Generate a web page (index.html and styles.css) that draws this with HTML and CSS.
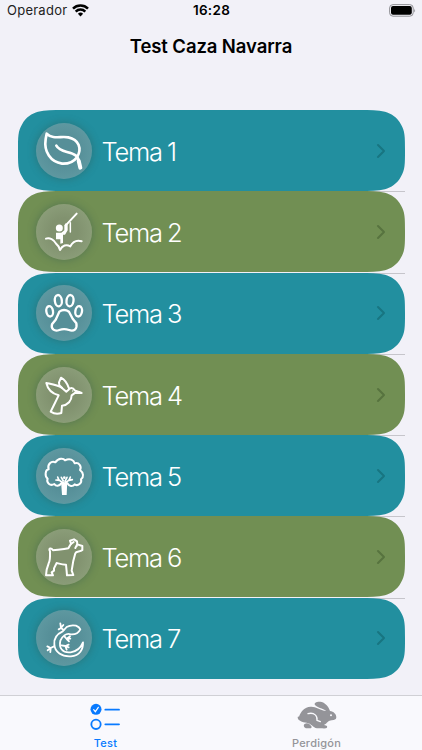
FILE: index.html
```html
<!DOCTYPE html>
<html lang="es">
<head>
<meta charset="utf-8">
<title>Test Caza Navarra</title>
<link rel="stylesheet" href="styles.css">
</head>
<body>
<svg class="defs" width="0" height="0" aria-hidden="true">
  <symbol id="card" viewBox="0 0 387 81" preserveAspectRatio="none"><path d="M0 40.5C0 27 0 21 4 14.5C8 7 14 3.5 20 1.8C27 0 35 0 45 0H342C352 0 360 0 367 1.8C373 3.5 379 7 383 14.5C387 21 387 27 387 40.5C387 54 387 60 383 66.5C379 74 373 77.5 367 79.2C360 81 352 81 342 81H45C35 81 27 81 20 79.2C14 77.5 8 74 4 66.5C0 60 0 54 0 40.5Z"/></symbol>
  <symbol id="chevron" viewBox="0 0 10 16"><path d="M2 2l6 6-6 6" fill="none" stroke="currentColor" stroke-width="2" stroke-linecap="round" stroke-linejoin="round"/></symbol>
</svg>
<div class="screen">
  <header>
    <div class="status">
      <div class="carrier"><span>Operador</span>
        <svg width="17" height="13" viewBox="0 0 17 13"><g fill="none" stroke="#000" stroke-width="2.5"><path d="M1 4.7a10.6 10.6 0 0 1 15 0"/><path d="M3.7 7.6a6.8 6.8 0 0 1 9.6 0"/></g><path d="M8.5 12.5L5.9 9.8a3.7 3.7 0 0 1 5.2 0z"/></svg>
      </div>
      <time>16:28</time>
      <div class="battery"><svg width="27" height="13" viewBox="0 0 27 13"><rect x=".6" y=".6" width="23.6" height="11.6" rx="3.4" fill="none" stroke="#919196"/><rect x="2" y="2" width="20.8" height="8.8" rx="2"/><path d="M25.2 4.4q1.6 2 0 4z" fill="#919196"/></svg></div>
    </div>
    <h1>Test Caza Navarra</h1>
  </header>
  <main>
    <a class="row teal"><svg class="shape"><use href="#card"/></svg>
      <svg class="icon" viewBox="77 68 168 168"><g class="line" stroke-width="8"><path d="M109 100C128 118 151 107 174 111C205 117 216 145 200 171C190 184 175 191 155 190C121 185 100 155 106 116Z"/><path d="M138 136C150 158 177 151 197 166Q206 174 206 187"/><path d="M205 181l5 21" stroke-width="12"/></g></svg>
      <span>Tema 1</span><svg class="chev"><use href="#chevron"/></svg></a>
    <a class="row green"><svg class="shape"><use href="#card"/></svg>
      <svg class="icon" viewBox="16 18 168 168"><circle cx="86" cy="90" r="10.5" fill="#fff"/><path d="M76 104H92L101 97V82L105 76L111 79V97L103 110H97V135L89 137V124H76Z" fill="#fff"/><g class="line" stroke-width="6"><path d="M105 82L138 47"/><path d="M119 74V102" stroke-width="4.5"/><path d="M46 122C57 118 70 125 76 137Q84 143 88 156C95 142 107 138 119 145C126 132 139 126 153 130"/></g></svg>
      <span>Tema 2</span><svg class="chev"><use href="#chevron"/></svg></a>
    <a class="row teal"><svg class="shape"><use href="#card"/></svg>
      <svg class="icon" viewBox="16 18 168 168"><g class="line" stroke-width="7"><ellipse cx="83" cy="65" rx="10.5" ry="17" transform="rotate(-7 83 65)"/><ellipse cx="118" cy="65" rx="10.5" ry="17" transform="rotate(7 118 65)"/><ellipse cx="57" cy="97" rx="10" ry="15.5" transform="rotate(-10 57 97)"/><ellipse cx="144" cy="97" rx="10" ry="15.5" transform="rotate(10 144 97)"/><path d="M86 98Q100 88 115 98L126 119L137 133C141 151 129 158 115 153Q100 148 86 153C72 158 60 151 64 136L75 122Z"/></g></svg>
      <span>Tema 3</span><svg class="chev"><use href="#chevron"/></svg></a>
    <a class="row green"><svg class="shape"><use href="#card"/></svg>
      <svg class="icon" viewBox="16 18 168 168"><g class="line" stroke-width="6"><path d="M94 81C80 71 61 69 47 66C51 84 65 98 84 103C77 117 68 136 60 152Q75 162 92 156L94 134C112 132 123 119 123 103L134 95L153 96L132 88C127 79 118 79 112 88L107 92Z"/><path d="M94 80L86 73L85 64L91 50C101 55 109 65 115 82"/></g><circle cx="126" cy="90" r="2" fill="#fff"/></svg>
      <span>Tema 4</span><svg class="chev"><use href="#chevron"/></svg></a>
    <a class="row teal"><svg class="shape"><use href="#card"/></svg>
      <svg class="icon" viewBox="16 18 168 168"><g class="line" stroke-width="6"><path d="M92 124C86 132 76 134 71 126C58 134 46 121 51 110C41 102 44 83 54 82C49 67 62 55 74 61C84 47 99 49 103 55C117 47 130 54 132 64C145 60 154 73 148 84C159 92 160 105 151 112C155 123 142 134 132 127C126 135 115 133 110 124"/><path d="M81 105L84 113L95 122M92 106L98 117M119 105L116 113L106 122M109 106L103 118M76 114L86 115M125 113L115 115" stroke-width="5"/></g><path d="M91 116L101 121L110 116L108 159H94Z" fill="#fff"/><circle cx="101" cy="107" r="4" fill="#fff"/></svg>
      <span>Tema 5</span><svg class="chev"><use href="#chevron"/></svg></a>
    <a class="row green"><svg class="shape"><use href="#card"/></svg>
      <svg class="icon" viewBox="16 18 168 168"><g class="line" stroke-width="6"><path d="M58 85C52 74 62 74 67 82C82 80 98 80 113 76L121 62L118 53L130 49L139 55L140 64L155 69V81C148 88 137 83 134 91L128 113L123 143L128 156L109 157L108 145L106 125C95 125 86 122 78 120L70 136V143L63 148L67 157H46L48 140L54 121Q59 113 58 85Z"/><path d="M121 63L129 57M139 65L134 75"/></g><circle cx="139" cy="69" r="2.5" fill="#fff"/></svg>
      <span>Tema 6</span><svg class="chev"><use href="#chevron"/></svg></a>
    <a class="row teal"><svg class="shape"><use href="#card"/></svg>
      <svg class="icon" viewBox="16 18 168 168"><g class="line" stroke-width="5.5"><path d="M96 82L108 69Q120 62 136 65Q146 69 149 76C144 86 133 92 120 91C106 86 94 98 89 110C84 131 95 148 120 145C139 142 151 130 157 115C158 136 147 155 121 157C94 159 72 145 71 121C69 102 77 91 96 82Z"/><path d="M99 78L91 72L84 76M91 72L89 58M91 72L98 63M70 127L60 132L50 127M60 132L51 139M60 132L59 144M102 98L108 105L119 104M108 105L118 97M108 105L115 112M92 124L104 126L114 122M104 126L114 130M104 126L108 137"/></g></svg>
      <span>Tema 7</span><svg class="chev"><use href="#chevron"/></svg></a>
  </main>
  <nav>
    <a class="tab active"><svg viewBox="268 98 96 87"><circle cx="289" cy="120" r="16.5" fill="currentColor"/><path d="M282 121l5 6 9-13" fill="none" stroke="#fff" stroke-width="3.5" stroke-linecap="round"/><circle cx="289" cy="165" r="14" fill="none" stroke="currentColor" stroke-width="5.5"/><path d="M317 121h41M317 165h41" stroke="currentColor" stroke-width="5.5" stroke-linecap="round"/></svg><span>Test</span></a>
    <a class="tab"><svg class="rabbit" viewBox="50 28 120 87" fill="currentColor"><path d="M56 75C61 60 72 46 91 45C106 44 119 54 131 57L138 57C127 51 109 47 104 40C99 33 112 28 124 31C137 35 145 46 149 58C160 59 168 68 168 77C168 84 162 86 154 86C144 86 140 96 131 100C140 101 143 105 139 109Q136 111 125 110H110C98 108 93 95 79 93C67 92 51 87 52 76Q53 73 56 75Z"/><path d="M74 96Q84 92 92 102Q98 109 87 110H80C71 109 67 100 74 96Z"/><path d="M83 66C103 61 112 74 110 86L120 90" fill="none" stroke="#f9f9fd" stroke-width="4" stroke-linecap="round"/><circle cx="152" cy="71" r="3" fill="#f9f9fd"/></svg><span>Perdigón</span></a>
  </nav>
</div>
</body>
</html>
```
FILE: styles.css
```css
* { box-sizing: border-box; }
body { margin: 0; background: #f2f1f8; color: #000; font-family: Inter, "Liberation Sans", sans-serif; }
.defs { display: block; height: 0; }
.screen { width: 422px; height: 750px; display: flex; flex-direction: column; overflow: hidden; }
header { height: 110px; }
.status { height: 20px; display: grid; grid-template-columns: 1fr auto 1fr; align-items: center; padding: 0 6px 0 7px; }
.carrier { display: flex; align-items: center; gap: 5px; font-size: 13px; letter-spacing: .25px; color: #222; }
time { font-size: 13.5px; font-weight: 600; letter-spacing: .3px; }
.battery { display: flex; justify-content: flex-end; }
h1 { margin: 14px 0 0; text-align: center; font-size: 18.5px; line-height: 24px; font-weight: 600; letter-spacing: -.1px; }
main { flex: 1; padding: 0 17.5px; }
.row { position: relative; display: grid; grid-template-columns: 56px 1fr 10px; column-gap: 10px; align-items: center; height: 81.3px; padding: 0 19px 0 18px; color: #fff; }
.row:not(:last-child)::after { content: ""; position: absolute; left: 84px; right: 0; bottom: -1px; height: 1px; background: #c6c5cb; z-index: -1; }
.shape { grid-area: 1 / 1 / 2 / 4; align-self: start; width: 387px; height: 81px; margin: 0 -19px 0 -18px; }
.teal .shape { fill: #228f9f; }
.green .shape { fill: #718f53; }
.icon { grid-area: 1 / 1; width: 56px; height: 56px; border-radius: 50%; box-shadow: 0 0 8px rgba(50, 85, 80, .48); }
.teal .icon { background: radial-gradient(circle at 50% 50%, #568f98 35%, #659fa7 100%); }
.green .icon { background: radial-gradient(circle at 50% 50%, #81926f 35%, #92a580 100%); }
.line { fill: none; stroke: #fff; stroke-linecap: round; stroke-linejoin: round; }
.row span { grid-area: 1 / 2; font-size: 25.5px; font-weight: 350; letter-spacing: -1.25px; word-spacing: -.6px; line-height: 32px; padding-top: 2px; }
.chev { grid-area: 1 / 3; width: 10px; height: 16px; }
.teal .chev { color: #187581; }
.green .chev { color: #57733f; }
nav { height: 55px; display: grid; grid-template-columns: 1fr 1fr; border-top: 1px solid #d0d0d5; background: #f9f9fd; }
.tab { display: flex; flex-direction: column; align-items: center; color: #949499; font-size: 11px; font-weight: 500; letter-spacing: .25px; line-height: 14px; }
.tab svg { width: 32px; height: 29px; margin: 6px 2px 5px 0; }
.tab .rabbit { width: 40px; height: 29px; margin: 5px 0 6px; }
.tab.active { color: #087aff; }
```
